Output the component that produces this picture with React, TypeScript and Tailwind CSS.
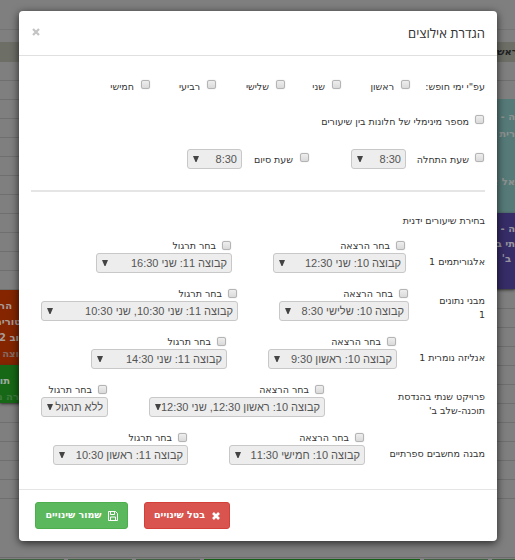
import React from 'react';

const small = "font-['DejaVu_Sans',sans-serif] text-[9.5px] leading-[14px] text-[#333] whitespace-nowrap";

function Box() {
  return (
    <span className="block h-[9px] w-[9px] shrink-0 rounded-[2px] border border-[#b4b4b4] bg-gradient-to-b from-[#eeeeee] to-[#dadada] shadow-[0_0_1px_#bbb]" />
  );
}

function Select({ text, className }: { text: string; className: string }) {
  return (
    <div className={`flex h-5 shrink-0 items-center rounded-[3px] border border-[#c8c8c8] bg-[#ededed] pr-1 pl-[5px] ${className}`}>
      <span className="min-w-0 flex-1 overflow-hidden font-['Liberation_Sans',sans-serif] text-[11px] leading-[18px] whitespace-nowrap text-[#555]">
        {text}
      </span>
      <svg className="mb-px h-[6px] w-[6px] shrink-0" viewBox="0 0 6 6">
        <path d="M0 0h6L3.5 6h-1z" fill="#444" />
      </svg>
    </div>
  );
}

function Pick({ label, option, width, className }: { label: string; option: string; width: string; className: string }) {
  return (
    <div className={`flex shrink-0 flex-col ${className} ${width}`}>
      <div className="flex h-3 items-start gap-[6px] pr-px">
        <Box />
        <span className={`-mt-[2px] ${small}`}>{label}</span>
      </div>
      <Select text={option} className="w-full" />
    </div>
  );
}

const days = [
  { name: 'ראשון', box: 'w-[69px]' },
  { name: 'שני', box: 'w-[56px]' },
  { name: 'שלישי', box: 'w-[69px]' },
  { name: 'רביעי', box: 'w-[66px]' },
  { name: 'חמישי', box: 'w-[50px]' },
];

const courses = [
  { name: ['אלגוריתמים 1'], nameBox: 'w-[79px]', lec: 'קבוצה 10: שני 12:30', lecBox: 'w-[133px]', ex: 'קבוצה 11: שני 16:30', exBox: 'w-[136px]', gap: 'mr-[41px]' },
  { name: ['מבני נתונים', '1'], nameBox: 'w-[76px]', lec: 'קבוצה 10: שלישי 8:30', lecBox: 'w-[130px]', ex: 'קבוצה 11: שני 10:30, שני 10:30', exBox: 'w-[197px]', gap: 'mr-[41px]' },
  { name: ['אנליזה נומרית 1'], nameBox: 'w-[88px]', lec: 'קבוצה 10: ראשון 9:30', lecBox: 'w-[129px]', ex: 'קבוצה 11: שני 14:30', exBox: 'w-[136px]', gap: 'mr-[41px]' },
  { name: ['פרויקט שנתי בהנדסת', "תוכנה-שלב ב'"], nameBox: 'w-[160px]', lec: 'קבוצה 10: ראשון 12:30, שני 12:30', lecBox: 'w-[176px]', ex: 'ללא תרגול', exBox: 'w-[67px]', gap: 'mr-[41px]' },
  { name: ['מבנה מחשבים ספרתיים'], nameBox: 'w-[120px]', lec: 'קבוצה 10: חמישי 11:30', lecBox: 'w-[136px]', ex: 'קבוצה 11: ראשון 10:30', exBox: 'w-[135px]', gap: 'mr-[41px]' },
];

const event = "absolute overflow-hidden font-['DejaVu_Sans',sans-serif] text-[10px] font-bold whitespace-nowrap";

function Backdrop() {
  return (
    <div className="absolute inset-0 overflow-hidden bg-[#7f7f7f]">
      <div className="absolute top-[29px] h-px w-full bg-[#747474]" />
      <div className="absolute top-[42px] h-5 w-full bg-[#6d6f67]" />
      <div className="absolute top-[80px] flex w-full flex-col">
        {Array.from({ length: 23 }, (_, i) => (
          <div key={i} className="h-[19px] border-t border-[#6f6f6d]" />
        ))}
      </div>
      <div className="absolute top-[499px] h-[58px] w-full bg-[#7f7f7f]" />
      <div className="absolute top-[536px] h-px w-full bg-[#7f7f7f]" />
      <div className="absolute top-[557px] h-px w-full bg-[#6c6c6c]" />
      <div className="absolute top-[559px] flex h-px gap-1">
        <span className="w-16 bg-[#3e623f]" />
        <span className="w-16 bg-[#3e623f]" />
        <span className="w-16 bg-[#3e623f]" />
        <span className="w-[216px] bg-[#145f16]" />
        <span className="w-16 bg-[#3e623f]" />
        <span className="w-16 bg-[#3e623f]" />
      </div>
      <div className="absolute top-[45px] left-[497px] w-[18px] overflow-hidden font-['DejaVu_Sans',sans-serif] text-[10px] leading-[14px] font-bold whitespace-nowrap text-[#222]">ראש</div>
      <div className={`${event} top-[99px] left-[490px] h-[114px] w-[25px] bg-[#567a78] text-[#8d9290]`}>
        <div dir="rtl" className="pt-[9px] leading-[17px]">
          <div>ה - 7</div>
          <div>רית</div>
          <div className="pt-[31px]">אל א</div>
        </div>
      </div>
      <div className={`${event} top-[213px] left-[490px] h-[76px] w-[25px] bg-[#362c67] text-[#96939f] shadow-[0_1px_3px_#333]`}>
        <div dir="rtl" className="pt-[8px] leading-[15px]">
          <div>ה - 2</div>
          <div>תי ב</div>
          <div className="pr-1">ב'</div>
        </div>
      </div>
      <div className={`${event} top-[290px] left-0 h-[75px] w-[30px] bg-[#842500] text-[#a99c98]`}>
        <div dir="rtl" className="pt-[8px] leading-[16px]">
          <div className="pr-[18px]">הר</div>
          <div className="pr-[9px]">טורית</div>
          <div className="pr-[11px]">וב 2</div>
          <div className="pr-[11px] text-[#866a60]">וצה 0</div>
        </div>
      </div>
      <div className={`${event} top-[365px] left-0 h-[38px] w-[30px] bg-[#166716] text-[#9eaa9e] shadow-[0_1px_3px_#333]`}>
        <div dir="rtl" className="pt-[8px] leading-[16px]">
          <div className="pr-[20px]">תו</div>
          <div className="pr-[11px] text-[#3f7a3f]">רה מס</div>
        </div>
      </div>
    </div>
  );
}

export default function App() {
  return (
    <div className="relative h-[560px] w-[515px] overflow-hidden pt-[11px] pl-[19px]">
      <Backdrop />
      <div dir="rtl" className="relative flex h-[530px] w-[478px] flex-col rounded-[4px] bg-white shadow-[0_2px_8px_rgba(0,0,0,0.7)]">
        <div className="flex h-[45px] items-center justify-between border-b border-[#e0e0e0] pr-3 pl-[13px]">
          <h4 className="font-['Open_Sans',sans-serif] text-[13px] leading-5 whitespace-nowrap text-[#333]">הגדרת אילוצים</h4>
          <svg className="mb-[2px] h-[8px] w-[8px]" viewBox="0 0 8 8">
            <path d="M1 1l6 6M7 1L1 7" stroke="#c4c4c4" strokeWidth="2.2" />
          </svg>
        </div>

        <div className="flex h-[433px] flex-col pr-3 pl-3">
          <div className="flex h-[14px] mt-[24px] items-start">
            <span className={`w-[75px] ${small}`}>עפ"י ימי חופש:</span>
            {days.map((d) => (
              <div key={d.name} className={`flex shrink-0 gap-[7px] ${d.box}`}>
                <Box />
                <span className={small}>{d.name}</span>
              </div>
            ))}
          </div>
          <div className="mt-[21px] flex h-[14px] gap-[6px] pr-px">
            <Box />
            <span className={small}>מספר מינימלי של חלונות בין שיעורים</span>
          </div>
          <div className="mt-5 flex h-5 pr-px">
            <div className="flex w-[78px] gap-[6px] pt-1">
              <Box />
              <span className={small}>שעת התחלה</span>
            </div>
            <Select text="8:30" className="w-[55px]" />
            <div className="mr-[42px] flex w-[67px] gap-[7px] pt-1">
              <Box />
              <span className={small}>שעת סיום</span>
            </div>
            <Select text="8:30" className="w-[55px]" />
          </div>
          <div className="mt-[21px] h-[2px] shrink-0 bg-[#e5e5e5]" />
          <div className={`mt-[22px] ${small}`}>בחירת שיעורים ידנית</div>
          <div className="mt-[13px] flex flex-col gap-4">
            {courses.map((c) => (
              <div key={c.name[0]} className="flex h-8 items-center">
                <div className={`shrink-0 ${c.nameBox} ${c.name.length > 1 ? 'pt-[6px]' : 'pt-[10px]'}`}>
                  {c.name.map((n) => (
                    <div key={n} className={small}>{n}</div>
                  ))}
                </div>
                <Pick label="בחר הרצאה" option={c.lec} width={c.lecBox} className="" />
                <Pick label="בחר תרגול" option={c.ex} width={c.exBox} className={c.gap} />
              </div>
            ))}
          </div>
        </div>

        <div className="flex h-[52px] justify-end gap-4 border-t border-[#e5e5e5] pt-3 pl-4">
          <button className="flex h-[27px] w-[86px] items-center justify-center gap-[7px] rounded-[3px] border border-[#d43f3a] bg-[#d9534f]">
            <svg className="h-2 w-2" viewBox="0 0 8 8">
              <path d="M1 1l6 6M7 1L1 7" stroke="#fff" strokeWidth="2.6" />
            </svg>
            <span className="font-['DejaVu_Sans',sans-serif] text-[9.5px] font-bold whitespace-nowrap text-white">בטל שינויים</span>
          </button>
          <button className="flex h-[27px] w-[93px] items-center justify-center gap-[6px] rounded-[3px] border border-[#4cae4c] bg-[#5cb85c]">
            <svg className="h-[10px] w-[10px]" viewBox="0 0 10 10" fill="none" stroke="#fff">
              <path d="M.5.5h7l2 2v7h-9zM2.5.5v3h4v-3M2.5 9.500v-3.500h5v3.500" />
            </svg>
            <span className="font-['DejaVu_Sans',sans-serif] text-[9.5px] font-bold whitespace-nowrap text-white">שמור שינויים</span>
          </button>
        </div>
      </div>
    </div>
  );
}
